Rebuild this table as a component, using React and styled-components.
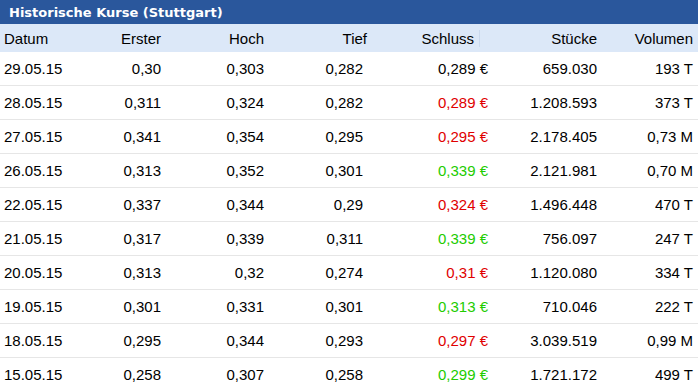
import styled, { createGlobalStyle } from 'styled-components';

const GlobalStyle = createGlobalStyle`
  body {
    margin: 0;
    background: #ffffff;
    font-family: 'Liberation Sans', Arial, sans-serif;
  }
`;

const rows = [
  { date: '29.05.15', first: '0,30', high: '0,303', low: '0,282', close: '0,289', trend: 'flat', pieces: '659.030', volume: '193 T' },
  { date: '28.05.15', first: '0,311', high: '0,324', low: '0,282', close: '0,289', trend: 'down', pieces: '1.208.593', volume: '373 T' },
  { date: '27.05.15', first: '0,341', high: '0,354', low: '0,295', close: '0,295', trend: 'down', pieces: '2.178.405', volume: '0,73 M' },
  { date: '26.05.15', first: '0,313', high: '0,352', low: '0,301', close: '0,339', trend: 'up', pieces: '2.121.981', volume: '0,70 M' },
  { date: '22.05.15', first: '0,337', high: '0,344', low: '0,29', close: '0,324', trend: 'down', pieces: '1.496.448', volume: '470 T' },
  { date: '21.05.15', first: '0,317', high: '0,339', low: '0,311', close: '0,339', trend: 'up', pieces: '756.097', volume: '247 T' },
  { date: '20.05.15', first: '0,313', high: '0,32', low: '0,274', close: '0,31', trend: 'down', pieces: '1.120.080', volume: '334 T' },
  { date: '19.05.15', first: '0,301', high: '0,331', low: '0,301', close: '0,313', trend: 'up', pieces: '710.046', volume: '222 T' },
  { date: '18.05.15', first: '0,295', high: '0,344', low: '0,293', close: '0,297', trend: 'down', pieces: '3.039.519', volume: '0,99 M' },
  { date: '15.05.15', first: '0,258', high: '0,307', low: '0,258', close: '0,299', trend: 'up', pieces: '1.721.172', volume: '499 T' }
];

const trendColors = {
  flat: '#000000',
  up: '#22cc00',
  down: '#e00000'
};

const App = () => (
  <>
    <GlobalStyle />
    <Table>
      <Title>Historische Kurse (Stuttgart)</Title>
      <HeaderRow>
        <HeadCell $left>Datum</HeadCell>
        <HeadCell>Erster</HeadCell>
        <HeadCell>Hoch</HeadCell>
        <HeadCell>Tief</HeadCell>
        <HeadCell $divider>Schluss</HeadCell>
        <HeadCell>Stücke</HeadCell>
        <HeadCell>Volumen</HeadCell>
      </HeaderRow>
      {rows.map(row => (
        <DataRow key={row.date}>
          <Cell $left>{row.date}</Cell>
          <Cell>{row.first}</Cell>
          <Cell>{row.high}</Cell>
          <Cell>{row.low}</Cell>
          <Cell $color={trendColors[row.trend]}>{row.close} €</Cell>
          <Cell>{row.pieces}</Cell>
          <Cell>{row.volume}</Cell>
        </DataRow>
      ))}
    </Table>
  </>
);

export default App;

const Table = styled.div`
  width: 698px;
  display: flex;
  flex-direction: column;
  color: #000000;
  font-size: 15px;
`;

const Title = styled.div`
  height: 24px;
  display: flex;
  align-items: center;
  padding-left: 9px;
  background: #2a579c;
  color: #ffffff;
  font-family: 'DejaVu Sans', Verdana, sans-serif;
  font-weight: bold;
  font-size: 13px;
`;

const HeaderRow = styled.div`
  height: 28px;
  display: grid;
  grid-template-columns: 96px 61px 103px 103px 113px 117px 96px;
  align-items: center;
  padding: 0 5px 0 4px;
  background: #dce8f8;
`;

const HeadCell = styled.div`
  text-align: ${props => (props.$left ? 'left' : 'right')};
  line-height: 17px;
  padding-right: ${props => (props.$divider ? '5px' : '0')};
  border-right: ${props => (props.$divider ? '1px solid #cad9ee' : 'none')};
`;

const DataRow = styled.div`
  height: 33px;
  display: grid;
  grid-template-columns: 96px 61px 103px 99px 125px 109px 96px;
  align-items: center;
  padding: 0 5px 0 4px;
  border-bottom: 1px solid #e6e6e6;
  flex-shrink: 0;
`;

const Cell = styled.div`
  text-align: ${props => (props.$left ? 'left' : 'right')};
  color: ${props => props.$color || '#000000'};
  white-space: nowrap;
`;
